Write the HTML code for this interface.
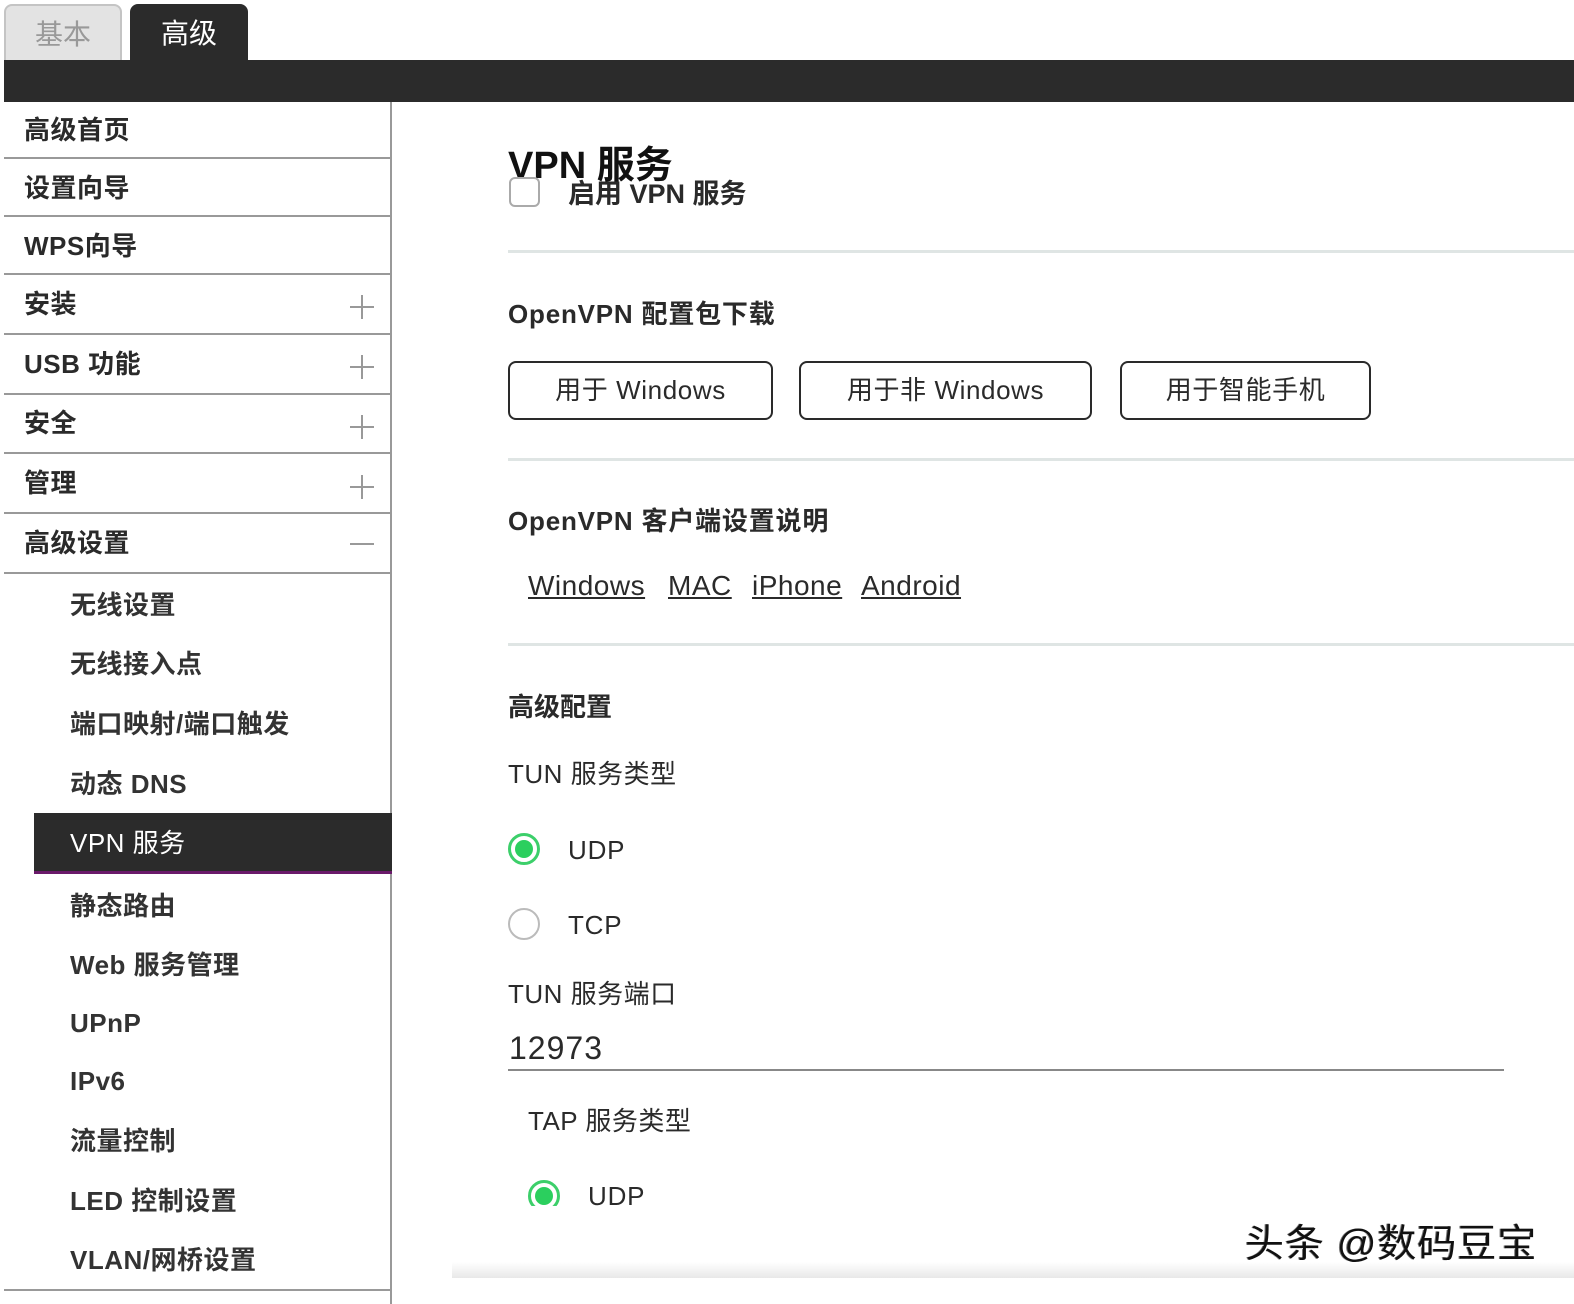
<!DOCTYPE html>
<html><head><meta charset="utf-8"><style>
*{margin:0;padding:0;box-sizing:border-box}
body{width:1574px;height:1304px;position:relative;background:#fff;overflow:hidden;font-family:"Liberation Sans","Noto Sans CJK SC",sans-serif;color:#222}
.a{position:absolute;white-space:nowrap}
.t{line-height:40px;height:40px}
.side{font-size:26px;font-weight:bold;color:#2a2a2a;left:24px;letter-spacing:0.5px}
.sub{font-size:26px;font-weight:bold;color:#333;left:70px;letter-spacing:0.5px}
.hl{position:absolute;left:4px;width:387px;height:2px;background:#999}
.plus{position:absolute;left:350px;width:24px;height:2px;background:#999}
.pv{position:absolute;left:361px;width:2px;height:24px;background:#999}
.btn{position:absolute;top:361px;height:59px;border:2px solid #2a2a2a;border-radius:8px;font-size:26px;color:#2a2a2a;text-align:center;line-height:55px;letter-spacing:0.6px}
.sep{position:absolute;left:508px;right:0;height:3px;background:#dfe5e4}
.lbl{font-size:26px;color:#2a2a2a}
.bold{font-weight:bold}
.radio{position:absolute;width:32px;height:32px;border-radius:50%;border:2px solid #bbb}
.radio.on{border:3px solid #3ccf6a}
.radio.on::after{content:"";position:absolute;left:4px;top:4px;width:18px;height:18px;border-radius:50%;background:#2bcf5e}
.lk{position:absolute;top:566px;font-size:28px;line-height:40px;color:#2a2a2a;text-decoration:underline;letter-spacing:0.5px}
</style></head><body>
<div class="a" style="left:4px;top:4px;width:118px;height:58px;background:#e3e3e3;border:2px solid #c4c4c4;border-bottom:none;border-radius:8px 8px 0 0;font-size:28px;color:#999;text-align:center;line-height:58px">基本</div>
<div class="a" style="left:130px;top:4px;width:118px;height:60px;background:#2b2b2b;border-radius:8px 8px 0 0;font-size:28px;color:#fff;text-align:center;line-height:60px">高级</div>
<div class="a" style="left:4px;top:60px;width:1570px;height:42px;background:#2b2b2b"></div>
<div class="a" style="left:390px;top:102px;width:2px;height:1202px;background:#999"></div>
<div class="a t side" style="top:110px">高级首页</div>
<div class="hl" style="top:157px"></div>
<div class="a t side" style="top:168px">设置向导</div>
<div class="hl" style="top:215px"></div>
<div class="a t side" style="top:226px">WPS向导</div>
<div class="hl" style="top:273px"></div>
<div class="a t side" style="top:284px">安装</div>
<div class="plus" style="top:306px"></div><div class="pv" style="top:295px"></div>
<div class="hl" style="top:333px"></div>
<div class="a t side" style="top:344px">USB 功能</div>
<div class="plus" style="top:366px"></div><div class="pv" style="top:355px"></div>
<div class="hl" style="top:393px"></div>
<div class="a t side" style="top:403px">安全</div>
<div class="plus" style="top:426px"></div><div class="pv" style="top:415px"></div>
<div class="hl" style="top:452px"></div>
<div class="a t side" style="top:463px">管理</div>
<div class="plus" style="top:486px"></div><div class="pv" style="top:475px"></div>
<div class="hl" style="top:512px"></div>
<div class="a t side" style="top:523px">高级设置</div>
<div class="plus" style="top:543px"></div>
<div class="hl" style="top:572px"></div>
<div class="a t sub" style="top:585px">无线设置</div>
<div class="a t sub" style="top:644px">无线接入点</div>
<div class="a t sub" style="top:704px">端口映射/端口触发</div>
<div class="a t sub" style="top:764px">动态 DNS</div>
<div class="a" style="left:34px;top:813px;width:358px;height:61px;background:#2b2b2b;border-bottom:3px solid #6a1a6a"></div>
<div class="a t" style="left:70px;top:823px;font-size:26px;color:#fff;letter-spacing:0.5px">VPN 服务</div>
<div class="a t sub" style="top:886px">静态路由</div>
<div class="a t sub" style="top:945px">Web 服务管理</div>
<div class="a t sub" style="top:1003px">UPnP</div>
<div class="a t sub" style="top:1061px">IPv6</div>
<div class="a t sub" style="top:1121px">流量控制</div>
<div class="a t sub" style="top:1181px">LED 控制设置</div>
<div class="a t sub" style="top:1240px">VLAN/网桥设置</div>
<div class="hl" style="top:1289px"></div>
<div class="a t" style="left:508px;top:144px;font-size:38px;font-weight:bold;color:#111;height:44px;line-height:44px">VPN 服务</div>
<div class="a" style="left:509px;top:177px;width:31px;height:30px;border:2px solid #aaa;border-radius:6px;background:#fff"></div>
<div class="a t lbl bold" style="left:568px;top:174px;font-size:27px">启用 VPN 服务</div>
<div class="sep" style="top:250px"></div>
<div class="a t lbl bold" style="left:508px;top:294px;letter-spacing:0.8px">OpenVPN 配置包下载</div>
<div class="btn" style="left:508px;width:265px">用于 Windows</div>
<div class="btn" style="left:799px;width:293px">用于非 Windows</div>
<div class="btn" style="left:1120px;width:251px">用于智能手机</div>
<div class="sep" style="top:458px"></div>
<div class="a t lbl bold" style="left:508px;top:501px;letter-spacing:0.8px">OpenVPN 客户端设置说明</div>
<div class="lk" style="left:528px">Windows</div>
<div class="lk" style="left:668px">MAC</div>
<div class="lk" style="left:752px">iPhone</div>
<div class="lk" style="left:861px">Android</div>
<div class="sep" style="top:643px"></div>
<div class="a t lbl bold" style="left:508px;top:687px">高级配置</div>
<div class="a t lbl" style="left:508px;top:754px;letter-spacing:0.5px">TUN 服务类型</div>
<div class="radio on" style="left:508px;top:833px"></div>
<div class="a t lbl" style="left:568px;top:830px;letter-spacing:0.8px">UDP</div>
<div class="radio" style="left:508px;top:908px"></div>
<div class="a t lbl" style="left:568px;top:905px;letter-spacing:0.8px">TCP</div>
<div class="a t lbl" style="left:508px;top:974px;letter-spacing:0.5px">TUN 服务端口</div>
<div class="a t lbl" style="left:509px;top:1028px;font-size:32px;letter-spacing:1px">12973</div>
<div class="a" style="left:508px;top:1069px;width:996px;height:2px;background:#888"></div>
<div class="a t lbl" style="left:528px;top:1101px;letter-spacing:0.5px">TAP 服务类型</div>
<div class="a" style="left:528px;top:1180px;width:34px;height:26px;overflow:hidden"><div class="radio on" style="left:0;top:0"></div></div>
<div class="a t lbl" style="left:588px;top:1176px;letter-spacing:0.8px">UDP</div>
<div class="a" style="left:452px;top:1262px;width:1122px;height:16px;background:linear-gradient(#fff,#e8e8e8)"></div>
<div class="a t" style="left:1245px;top:1222px;font-size:39px;letter-spacing:1px;height:46px;line-height:46px;color:#111;text-shadow:1px 1px 0 #fff,-1px 0 0 #777">头条 @数码豆宝</div>
</body></html>
